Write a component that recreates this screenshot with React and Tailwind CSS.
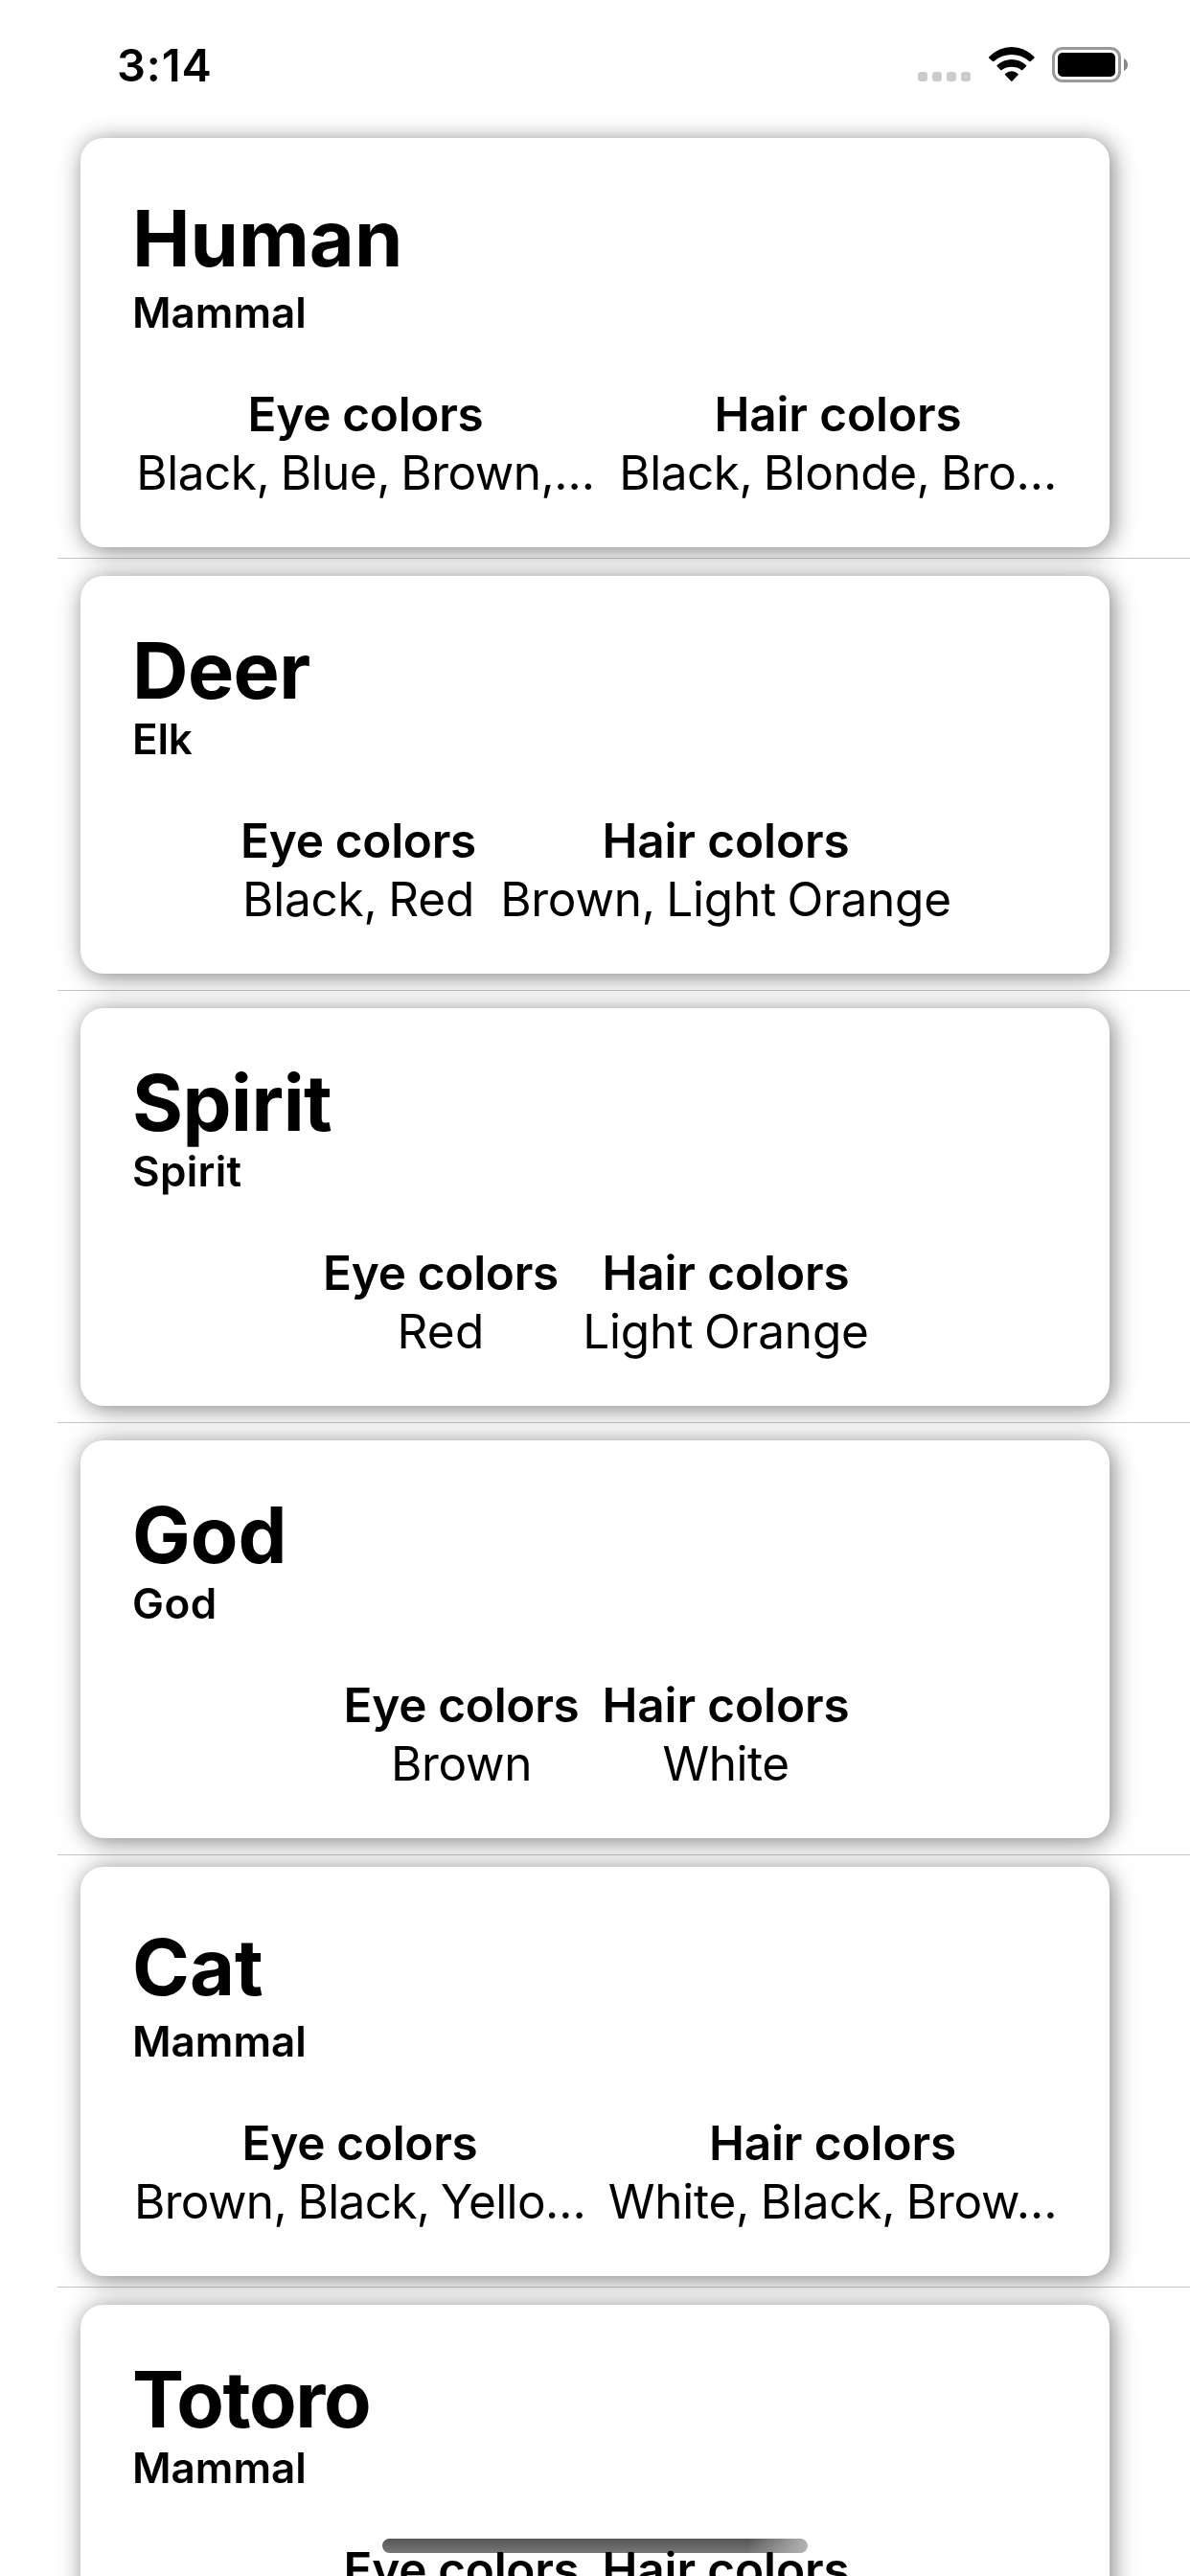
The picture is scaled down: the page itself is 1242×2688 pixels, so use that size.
const species = [
  {
    name: "Human", nameTracking: "", kind: "Mammal", kindTracking: "", tall: true,
    eye: "Black, Blue, Brown,…", eyeWidth: "w-[480px]", eyeTracking: "tracking-[-0.5px]",
    hair: "Black, Blonde, Bro…", hairWidth: "w-[458px]", hairTracking: "tracking-[-0.45px]",
  },
  {
    name: "Deer", nameTracking: "tracking-[-0.6px]", kind: "Elk", kindTracking: "tracking-[-0.2px]",
    eye: "Black, Red", eyeWidth: "w-[246px]", eyeTracking: "tracking-[-0.2px]",
    hair: "Brown, Light Orange", hairWidth: "w-[473px]", hairTracking: "tracking-[-0.25px]",
  },
  {
    name: "Spirit", nameTracking: "tracking-[-0.5px]", kind: "Spirit", kindTracking: "tracking-[0.3px]",
    eye: "Red", eyeWidth: "w-[246px]", eyeTracking: "tracking-[0.3px]",
    hair: "Light Orange", hairWidth: "w-[301px]", hairTracking: "tracking-[-0.15px]",
  },
  {
    name: "God", nameTracking: "", kind: "God", kindTracking: "tracking-[0.5px]",
    eye: "Brown", eyeWidth: "w-[246px]", eyeTracking: "tracking-[-0.3px]",
    hair: "White", hairWidth: "w-[258px]", hairTracking: "tracking-[-0.5px]",
  },
  {
    name: "Cat", nameTracking: "", kind: "Mammal", kindTracking: "", tall: true,
    eye: "Brown, Black, Yello…", eyeWidth: "w-[469px]", eyeTracking: "tracking-[-0.63px]",
    hair: "White, Black, Brow…", hairWidth: "w-[471px]", hairTracking: "tracking-[-0.25px]",
  },
  {
    name: "Totoro", nameTracking: "tracking-[-1.4px]", kind: "Mammal", kindTracking: "",
    eyeWidth: "w-[246px]", hairWidth: "w-[258px]",
  },
];

function StatusBar() {
  return (
    <header className="flex h-[132px] shrink-0 items-start pl-[122px] pr-[65px]">
      <span className="mt-[38px] text-[47px] font-semibold leading-[60px] tracking-[0.9px]">3:14</span>
      <div className="ml-auto flex">
        <div className="mt-[75px] flex gap-[5px]">
          {[0, 1, 2, 3].map((i) => (
            <span key={i} className="size-2.5 rounded-[3px] bg-[#cccccc]" />
          ))}
        </div>
        <svg className="ml-[19px] mt-[49px] h-9 w-[47.7px]" viewBox="0 0 143 108" aria-hidden="true">
          <path d="M1 31A96 96 0 0 1 142 31Q144 33 142 35L131 45Q129 47 127 45A84 84 0 0 0 16 45Q14 47 12 45L1 35Q-1 33 1 31Z" />
          <path d="M26 57A66.500 66.500 0 0 1 117 57Q119 59 117 61L106 72Q104 74 102 72A52 52 0 0 0 41 72Q39 74 37 72L26 61Q24 59 26 57Z" />
          <path d="M51.500 84A29 29 0 0 1 91.500 84Q93 86 91.500 88L73 107Q71.500 108 70 107L51.500 88Q50 86 51.500 84Z" />
        </svg>
        <div className="ml-[18.300px] mt-[49px] h-[37px] w-[72px] rounded-[11px] border-[3px] border-[#999999] p-[3px]">
          <div className="h-[25px] w-[60px] rounded-[5px] bg-black" />
        </div>
        <svg className="ml-[3px] mt-[61px] h-[13px] w-1" viewBox="0 0 4 13" aria-hidden="true">
          <path d="M0 0Q4 2 4 6.500T0 13Z" fill="#888888" />
        </svg>
      </div>
    </header>
  );
}

function ColorColumn({ label, labelTracking, value, width, tracking }) {
  return (
    <div className={`flex flex-col items-center whitespace-nowrap text-[49.5px] leading-[61px] ${width}`}>
      <span className={`font-semibold ${labelTracking}`}>{label}</span>
      {value && <span className={`[word-spacing:-2px] ${tracking}`}>{value}</span>}
    </div>
  );
}

function SpeciesRow({ item }) {
  return (
    <li className={`flex h-[451px] shrink-0 flex-col ${item.tall ? "pt-3" : "pt-[18px]"}`}>
      <article
        className={`ml-[84px] w-[1074px] rounded-[24px] bg-white px-[54px] shadow-[3px_3px_24px_rgba(0,0,0,0.5)] ${
          item.tall ? "h-[427px] pt-[60px]" : "h-[415px] pt-[54px]"
        }`}
      >
        <h2 className={`-mb-0.5 text-[81px] font-bold leading-[91px] ${item.nameTracking}`}>{item.name}</h2>
        <p className={`text-[44px] font-semibold leading-[54px] ${item.tall ? "pt-1.5" : ""} ${item.kindTracking}`}>
          {item.kind}
        </p>
        <div className="mt-[49px] flex justify-center gap-6 pl-[3px]">
          <ColorColumn label="Eye colors" labelTracking="tracking-[-0.3px]" value={item.eye} width={item.eyeWidth} tracking={item.eyeTracking} />
          <ColorColumn label="Hair colors" labelTracking="tracking-[-0.1px]" value={item.hair} width={item.hairWidth} tracking={item.hairTracking} />
        </div>
      </article>
      <div className="ml-[60px] mt-auto h-px bg-[rgba(60,60,67,0.29)]" />
    </li>
  );
}

export default function App() {
  return (
    <main className="relative flex h-[2688px] w-[1242px] flex-col overflow-hidden bg-white font-[Inter,sans-serif] text-black">
      <StatusBar />
      <ul className="flex flex-col">
        {species.map((item) => (
          <SpeciesRow key={item.name} item={item} />
        ))}
      </ul>
      <div className="absolute bottom-6 left-[399px] h-[15px] w-[444px] rounded-[7.5px] bg-[linear-gradient(to_right,transparent_86%,#b4b4b4_100%),linear-gradient(to_bottom,#555555,#777777)] mix-blend-darken" />
    </main>
  );
}
